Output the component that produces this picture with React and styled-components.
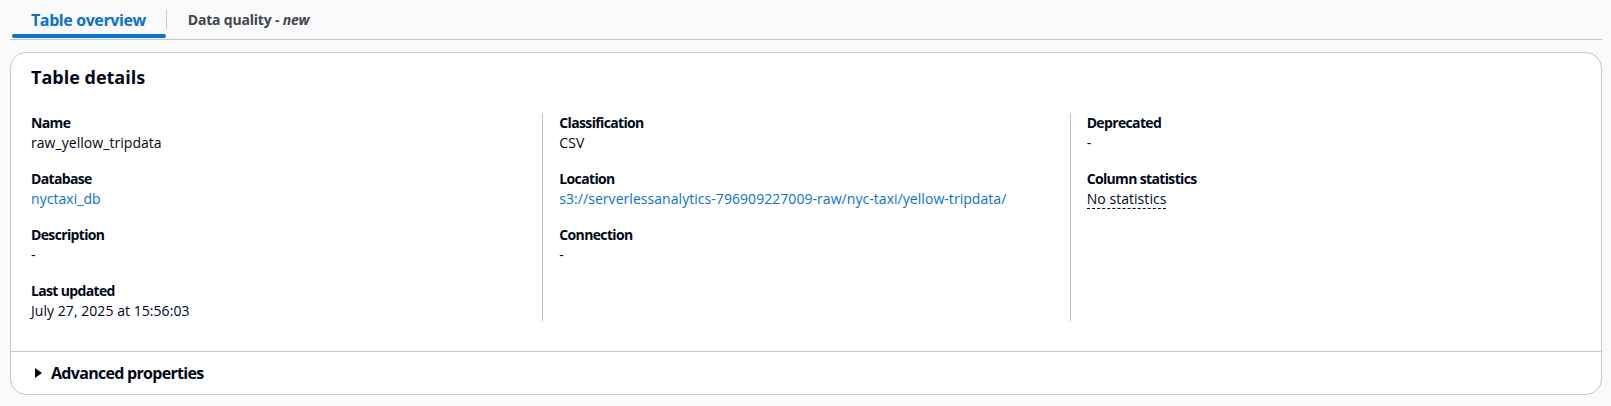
import styled, { createGlobalStyle } from "styled-components";

const GlobalStyle = createGlobalStyle`
  body {
    margin: 0;
    background: #fafafa;
    font-family: "Open Sans", "Noto Sans", sans-serif;
    color: #000716;
  }
`;

const Page = styled.div`
  padding: 0 9px 0 10px;
`;

const TabList = styled.div`
  display: flex;
  align-items: stretch;
  height: 39px;
  border-bottom: 1px solid #c6c6cd;
`;

const Tab = styled.div`
  position: relative;
  display: flex;
  align-items: center;
  padding: 0 20px 0 21px;
  font-size: ${(p) => (p.$active ? "16px" : "14px")};
  font-weight: 700;
  letter-spacing: ${(p) => (p.$active ? "-0.4px" : "-0.2px")};
  color: ${(p) => (p.$active ? "#0972d3" : "#424650")};
  cursor: pointer;

  & em {
    font-style: italic;
  }

  &::after {
    content: "";
    display: ${(p) => (p.$active ? "block" : "none")};
    position: absolute;
    left: 2px;
    right: 0;
    bottom: 1px;
    height: 4px;
    border-radius: 2px;
    background: #0972d3;
  }
`;

const TabSeparator = styled.div`
  width: 1px;
  background: #c6c6cd;
  margin: 10px 0 10px;
`;

const Card = styled.section`
  margin-top: 12px;
  background: #ffffff;
  border: 1px solid #c6c6cd;
  border-radius: 16px;
`;

const CardHeader = styled.h2`
  margin: 0;
  padding: 12px 20px 8px;
  font-size: 18px;
  line-height: 24px;
  font-weight: 700;
`;

const CardBody = styled.div`
  padding: 16px 20px 30px;
`;

const Columns = styled.div`
  display: grid;
  grid-template-columns: repeat(3, 1fr);
  margin: 0 -16px;
`;

const Column = styled.div`
  display: flex;
  flex-direction: column;
  gap: 16px;
  padding: 0 16px;
  border-left: ${(p) => (p.$divider ? "1px solid #c6c6cd" : "none")};
`;

const Field = styled.div`
  display: flex;
  flex-direction: column;
  font-size: 14px;
  line-height: 20px;
`;

const Label = styled.div`
  font-weight: 700;
  letter-spacing: -0.65px;
`;

const Value = styled.div`
  color: #000716;
  letter-spacing: 0.05px;
`;

const Link = styled.a`
  color: #0972d3;
  text-decoration: none;
`;

const Dotted = styled.span`
  border-bottom: 1px dashed #000716;
`;

const Footer = styled.div`
  display: flex;
  align-items: center;
  gap: 4px;
  padding: 10px 20px 10px;
  border-top: 1px solid #c6c6cd;
  font-size: 16px;
  line-height: 22px;
  font-weight: 700;
  letter-spacing: -0.7px;
  cursor: pointer;
`;

const Caret = styled.svg`
  width: 16px;
  height: 16px;
  flex: none;
`;

const details = [
  [
    { label: "Name", value: "raw_yellow_tripdata" },
    { label: "Database", value: "nyctaxi_db", link: true },
    { label: "Description", value: "-" },
    { label: "Last updated", value: "July 27, 2025 at 15:56:03" },
  ],
  [
    { label: "Classification", value: "CSV" },
    {
      label: "Location",
      value: "s3://serverlessanalytics-796909227009-raw/nyc-taxi/yellow-tripdata/",
      link: true,
    },
    { label: "Connection", value: "-" },
  ],
  [
    { label: "Deprecated", value: "-" },
    { label: "Column statistics", value: "No statistics", dotted: true },
  ],
];

function FieldValue({ item }) {
  if (item.link) return <Link href="#">{item.value}</Link>;
  if (item.dotted) return <Dotted>{item.value}</Dotted>;
  return item.value;
}

export default function App() {
  return (
    <Page>
      <GlobalStyle />
      <TabList>
        <Tab $active>Table overview</Tab>
        <TabSeparator />
        <Tab>
          Data quality -&nbsp;<em>new</em>
        </Tab>
      </TabList>
      <Card>
        <CardHeader>Table details</CardHeader>
        <CardBody>
          <Columns>
            {details.map((col, i) => (
              <Column key={i} $divider={i > 0}>
                {col.map((item) => (
                  <Field key={item.label}>
                    <Label>{item.label}</Label>
                    <Value>
                      <FieldValue item={item} />
                    </Value>
                  </Field>
                ))}
              </Column>
            ))}
          </Columns>
        </CardBody>
        <Footer>
          <Caret viewBox="0 0 16 16">
            <path d="M4 3 L11 8 L4 13 Z" fill="#000716" />
          </Caret>
          Advanced properties
        </Footer>
      </Card>
    </Page>
  );
}
